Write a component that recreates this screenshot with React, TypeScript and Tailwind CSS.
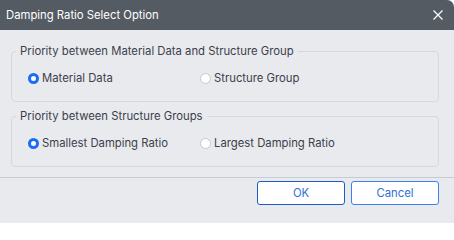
import { useState } from "react";

function Radio({ checked, label, onClick }: { checked: boolean; label: string; onClick: () => void }) {
  return (
    <button onClick={onClick} className="flex h-[14px] items-center gap-[3px] text-[11.3px] leading-[14px] text-[#3b3e4c]">
      {checked ? (
        <span className="block h-[11px] w-[11px] rounded-full border-[3px] border-[#1b6ef3] bg-white" />
      ) : (
        <span className="block h-[11px] w-[11px] rounded-full border border-[#c4c7cc] bg-white" />
      )}
      <span>{label}</span>
    </button>
  );
}

function Group({ title, options }: { title: string; options: string[] }) {
  const [value, setValue] = useState(0);
  return (
    <fieldset className="rounded-[4px] border border-[#d6d8dc] px-[4px] pb-[16px] pt-[13px]">
      <legend className="px-[4px] text-[11.3px] leading-[14px] text-[#3b3e4c]">{title}</legend>
      <div className="grid grid-cols-[172px_1fr] pl-[12px]">
        {options.map((o, i) => (
          <Radio key={o} checked={value === i} label={o} onClick={() => setValue(i)} />
        ))}
      </div>
    </fieldset>
  );
}

export default function App() {
  return (
    <div
      className="flex h-[223px] w-[454px] flex-col overflow-hidden rounded-tr-[7px] bg-[#e9eaee]"
      style={{ fontFamily: "Inter, 'Noto Sans', sans-serif" }}
    >
      <div className="flex h-[30px] shrink-0 items-center justify-between bg-[#545b63] pl-[6px] pr-[11px]">
        <span className="text-[11.3px] text-white">Damping Ratio Select Option</span>
        <svg width="10" height="10" viewBox="0 0 10 10" className="text-white">
          <path d="M0.5 0.5 L9.5 9.5 M9.5 0.5 L0.5 9.5" stroke="currentColor" strokeWidth="1.2" />
        </svg>
      </div>
      <div className="flex flex-col gap-[7px] pl-[11px] pr-[15px] pt-[14px]">
        <Group
          title="Priority between Material Data and Structure Group"
          options={["Material Data", "Structure Group"]}
        />
        <Group
          title="Priority between Structure Groups"
          options={["Smallest Damping Ratio", "Largest Damping Ratio"]}
        />
      </div>
      <div className="mt-[10px] flex justify-end gap-[6px] border-t border-[#c8ccd1] pr-[15px] pt-[3px]">
        <button className="h-[24px] w-[88px] rounded-[3px] border border-[#1a5cc4] bg-white text-[11.3px] text-[#2f6fd6]">
          OK
        </button>
        <button className="h-[24px] w-[88px] rounded-[3px] border border-[#3a82f0] bg-white text-[11.3px] text-[#2f6fd6]">
          Cancel
        </button>
      </div>
    </div>
  );
}
